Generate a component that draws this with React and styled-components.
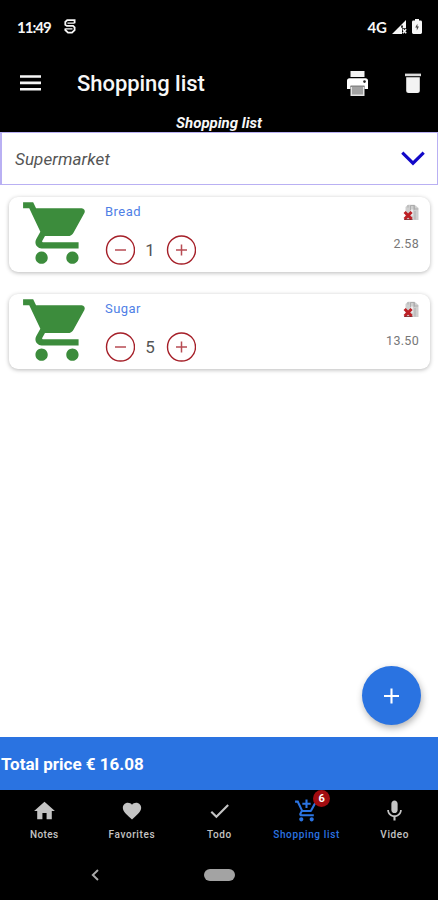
import React from 'react';
import styled, {createGlobalStyle, css} from 'styled-components';

const colors = {
  blue: '#2a73e1',
  link: '#4f7fe6',
  navBlue: '#2b74e2',
  green: '#3c8c3c',
  red: '#a51f28',
  outline: '#b9b0f3',
  chevron: '#1208c8',
  grey: '#c4c4c4',
};

const items = [
  {id: 1, name: 'Bread', count: 1, price: '2.58'},
  {id: 2, name: 'Sugar', count: 5, price: '13.50'},
];

const GlobalStyle = createGlobalStyle`
  * {
    box-sizing: border-box;
  }

  body {
    margin: 0;
    background: #fff;
    font-family: Roboto, 'Liberation Sans', sans-serif;
  }

  svg {
    display: block;
    flex: none;
  }

  button {
    padding: 0;
    border: 0;
    background: none;
    font: inherit;
    color: inherit;
  }
`;

const Screen = styled.div`
  display: flex;
  flex-direction: column;
  width: 438px;
  height: 900px;
  overflow: hidden;
`;

const Header = styled.header`
  flex: none;
  height: 132px;
  background: #000;
  color: #f7f7f7;
`;

const StatusBar = styled.div`
  display: flex;
  align-items: center;
  height: 53px;
  padding: 0 16px 0 17px;
`;

const Clock = styled.span`
  width: 47px;
  font-family: Lato, Roboto, sans-serif;
  font-size: 15px;
  font-weight: 700;
  line-height: 18px;
  letter-spacing: -1px;
`;

const StatusIcons = styled.div`
  display: flex;
  align-items: center;
  gap: 5px;
  margin-left: auto;
`;

const Network = styled.span`
  font-family: Lato, Roboto, sans-serif;
  font-size: 15px;
  font-weight: 700;
  line-height: 18px;
`;

const AppBar = styled.div`
  display: flex;
  align-items: center;
  height: 60px;
  padding: 0 17px 0 20px;
`;

const Title = styled.h1`
  flex: 1;
  margin: 0 0 0 36px;
  padding-top: 1px;
  font-size: 22px;
  font-weight: 500;
  line-height: 26px;
  letter-spacing: -0.05px;
`;

const Actions = styled.div`
  display: flex;
  align-items: center;
  gap: 37px;
`;

const Subtitle = styled.div`
  padding-top: 1px;
  font-size: 15px;
  font-style: italic;
  font-weight: 700;
  line-height: 18px;
  text-align: center;
`;

const Store = styled.button`
  display: flex;
  flex: none;
  align-items: center;
  justify-content: space-between;
  height: 53px;
  padding: 0 12px 0 13px;
  border: 1px solid ${colors.outline};
  border-left-width: 2px;
  color: #555;
`;

const StoreName = styled.span`
  padding-top: 1px;
  font-size: 17px;
  font-style: italic;
  letter-spacing: 0.1px;
`;

const List = styled.main`
  display: flex;
  flex: 1;
  flex-direction: column;
  gap: 22px;
  padding: 12px 8px 0 9px;
`;

const Card = styled.article`
  display: flex;
  height: 75px;
  padding-right: 11px;
  border-radius: 9px;
  background: #fff;
  box-shadow: 0 1px 4px rgba(0, 0, 0, 0.28);
`;

const CartBox = styled.div`
  width: 96px;
  margin-top: -1px;
  padding-left: 11px;
  color: ${colors.green};
`;

const Details = styled.div`
  flex: 1;
`;

const ItemName = styled.div`
  padding-top: 7px;
  font-size: 13px;
  line-height: 16px;
  letter-spacing: 0.45px;
  color: ${colors.link};
`;

const Stepper = styled.div`
  display: flex;
  align-items: center;
  margin-top: 15px;
`;

const StepButton = styled.button`
  width: 30px;
  height: 30px;
  color: ${colors.red};
`;

const Count = styled.span`
  width: 31px;
  padding-right: 1px;
  font-size: 17px;
  line-height: 20px;
  text-align: center;
  color: #555;
`;

const Side = styled.div`
  display: flex;
  flex-direction: column;
  align-items: flex-end;
  padding-top: 7px;
`;

const Price = styled.div`
  margin-top: 15px;
  font-size: 12.5px;
  line-height: 16px;
  letter-spacing: 0.3px;
  color: #777;
`;

const Fab = styled.button`
  display: flex;
  align-items: center;
  justify-content: center;
  align-self: flex-end;
  width: 59px;
  height: 59px;
  margin: auto 9px 12px 0;
  border-radius: 50%;
  background: ${colors.blue};
  box-shadow: 1px 3px 7px rgba(0, 0, 0, 0.3);
  color: #fff;
`;

const Total = styled.div`
  flex: none;
  height: 53px;
  padding-left: 1px;
  background: ${colors.blue};
  font-size: 17px;
  font-weight: 700;
  line-height: 54px;
  color: #fff;
`;

const TabBar = styled.nav`
  display: grid;
  flex: none;
  grid-template-columns: repeat(5, 1fr);
  height: 60px;
  background: #000;
`;

const Tab = styled.div`
  display: flex;
  flex-direction: column;
  align-items: center;
  padding: 8px 0 0 1px;
  color: ${colors.grey};

  ${props =>
    props.$active &&
    css`
      padding-left: 0;
      color: ${colors.navBlue};
    `};
`;

const TabIcon = styled.div`
  position: relative;
  height: 26px;
`;

const TabLabel = styled.span`
  margin-top: 4px;
  font-size: 10px;
  font-weight: 500;
  line-height: 14px;
  letter-spacing: ${props => props.$spacing || 0.15}px;
  white-space: nowrap;
`;

const Badge = styled.span`
  position: absolute;
  top: -8px;
  left: 19px;
  width: 17px;
  height: 17px;
  border-radius: 50%;
  background: #a00c10;
  font-size: 11px;
  font-weight: 700;
  line-height: 17px;
  text-align: center;
  color: #fff;
`;

const SystemBar = styled.div`
  display: grid;
  flex: none;
  grid-template-columns: 190px 58px 190px;
  align-items: center;
  justify-items: center;
  height: 50px;
  background: #000;
  color: #aaa;
`;

const HomePill = styled.div`
  width: 31px;
  height: 12px;
  border-radius: 6px;
  background: #a3a3a3;
`;

const SyncIcon = () => (
  <svg width="12" height="15" viewBox="0 0 12 15" fill="none" stroke="currentColor">
    <path d="M10.6 4.2V1.2H3.2L1.3 3v2.7l1.6 1.2h6.2l1.5 1.5v2.8L8 13.6H4L1.3 11V9.6" strokeWidth="1.8" />
    <path d="M3.5 4.2h7M1.5 9.8h7" strokeWidth="1.3" />
  </svg>
);

const SignalIcon = () => (
  <svg width="15" height="14" viewBox="0 0 15 14">
    <path d="M14 0v8.2h-4V14H0z" fill="currentColor" />
    <path d="M9.2 5.5h1.6v2.3H9.2z" fill="#000" />
    <path d="M10.8 9.3l3.4 3.9M14.2 9.3l-3.4 3.9" stroke="currentColor" strokeWidth="1.5" />
  </svg>
);

const BatteryIcon = () => (
  <svg width="10" height="15" viewBox="0 0 10 15">
    <path d="M3 0h4v1.6h1.6Q10 1.6 10 3v10.6Q10 15 8.6 15H1.4Q0 15 0 13.6V3q0-1.4 1.4-1.4H3z" fill="currentColor" />
    <path d="M5.4 4.8L3.2 8.6h1.6v2.8L6.9 7.6H5.4z" fill="#444" />
  </svg>
);

const MenuIcon = () => (
  <svg width="21" height="16" viewBox="0 0 21 16">
    <path d="M0 .2h21v2.6H0zM0 6.6h21v2.6H0zM0 13h21v2.6H0z" fill="currentColor" />
  </svg>
);

const PrinterIcon = () => (
  <svg width="21" height="25" viewBox="0 0 21 25">
    <path d="M3.5 0h14v6h-14z" fill="#f2f2f2" />
    <path d="M2.5 7.2h16Q21 7.2 21 9.7V18h-3.5v-3.2h-14V18H0V9.7q0-2.5 2.5-2.5z" fill="#fff" />
    <path d="M3.5 15.4h14V25h-14z" fill="#e4e4e4" />
    <path d="M5 16h11v7.5H5z" fill="#a2a2a2" />
    <circle cx="17.5" cy="10.6" r="1.3" fill="#222" />
  </svg>
);

const TrashIcon = () => (
  <svg width="16" height="21" viewBox="0 0 16 21">
    <path d="M0 .6h16v2.6H0z" fill="#ddd" />
    <path d="M1.2 4.2h13.6V17.5q0 2.5-2.5 2.5H3.7q-2.5 0-2.5-2.5z" fill="#f3f3f3" />
  </svg>
);

const ChevronIcon = () => (
  <svg width="24" height="15" viewBox="0 0 24 15">
    <path d="M1.3 1.6L12 12.2 22.7 1.6" fill="none" stroke={colors.chevron} strokeWidth="3.1" />
  </svg>
);

const CartIcon = () => (
  <svg width="74" height="74" viewBox="0 0 24 24" fill="currentColor">
    <path d="M7 18c-1.1 0-1.99.9-1.99 2S5.9 22 7 22s2-.9 2-2-.9-2-2-2zM1 2v2h2l3.6 7.59-1.35 2.45c-.16.28-.25.61-.25.96 0 1.1.9 2 2 2h12v-2H7.42c-.14 0-.25-.11-.25-.25l.03-.12.9-1.63h7.45c.75 0 1.41-.41 1.75-1.03l3.58-6.49A1.003 1.003 0 0 0 20 4H5.21l-.94-2H1zm16 16c-1.1 0-1.99.9-1.99 2s.89 2 1.99 2 2-.9 2-2-.9-2-2-2z" />
  </svg>
);

const StepIcon = ({plus}) => (
  <svg width="30" height="30" viewBox="0 0 30 30" fill="none" stroke="currentColor">
    <circle cx="15.5" cy="15" r="14" strokeWidth="1.4" />
    <path d={plus ? 'M10 15h11M15.5 9.5v11' : 'M10 15h11'} strokeWidth="1.5" opacity="0.8" />
  </svg>
);

// small document with a red cross over its lower left corner
const RemoveIcon = () => (
  <svg width="16" height="17" viewBox="0 0 16 17">
    <path d="M2.5 3L5 .8h6.5L15.5 4v12H2.5z" fill="#cfcfcf" />
    <path d="M5 3.5V1M7.5 6V1.5h3.7V6M11.2 1.2V5h4M12 7v8.5" fill="none" stroke="#aaa" strokeWidth="0.9" />
    <path d="M8 5.5h2v6H8z" fill="#ededed" />
    <path d="M1.6 8l7 7M8.6 8l-7 7" stroke="#bd2025" strokeWidth="3" />
    <path d="M1 15.5h8.5" stroke="#7b1b20" strokeWidth="0.8" />
  </svg>
);

const PlusIcon = () => (
  <svg width="16" height="16" viewBox="0 0 16 16">
    <path d="M0 8h15M7.5 .5v15" stroke="currentColor" strokeWidth="2.1" />
  </svg>
);

const tabPaths = {
  home: 'M10 20v-6h4v6h5v-8h3L12 3 2 12h3v8z',
  heart:
    'M12 21.35l-1.45-1.32C5.4 15.36 2 12.28 2 8.5 2 5.42 4.42 3 7.5 3c1.74 0 3.41.81 4.5 2.09C13.09 3.81 14.76 3 16.5 3 19.58 3 22 5.42 22 8.5c0 3.78-3.4 6.86-8.55 11.54L12 21.35z',
  check: 'M9 16.17L4.83 12l-1.42 1.41L9 19 21 7l-1.41-1.41z',
  cart:
    'M11 9h2V6h3V4h-3V1h-2v3H8v2h3v3zm-4 9c-1.1 0-1.99.9-1.99 2S5.9 22 7 22s2-.9 2-2-.9-2-2-2zm10 0c-1.1 0-1.99.9-1.99 2s.89 2 1.99 2 2-.9 2-2-.9-2-2-2zm-9.83-3.25l.03-.12.9-1.63h7.45c.75 0 1.41-.41 1.75-1.03l3.86-7.01L19.42 4h-.01l-1.1 2-2.76 5H8.53l-.13-.27L6.16 6l-.95-2-.94-2H1v2h2l3.6 7.59-1.35 2.45c-.16.28-.25.61-.25.96 0 1.1.9 2 2 2h12v-2H7.42c-.13 0-.25-.11-.25-.25z',
  mic:
    'M12 14c1.66 0 2.99-1.34 2.99-3L15 5c0-1.66-1.34-3-3-3S9 3.34 9 5v6c0 1.66 1.34 3 3 3zm5.3-3c0 3-2.54 5.1-5.3 5.1S6.7 14 6.7 11H5c0 3.41 2.72 6.23 6 6.72V21h2v-3.28c3.28-.48 6-3.3 6-6.72h-1.7z',
};

const tabs = [
  {icon: 'home', label: 'Notes', size: 25, spacing: 0.35},
  {icon: 'heart', label: 'Favorites', size: 22, spacing: 0.6},
  {icon: 'check', label: 'Todo', size: 25, spacing: 0.6},
  {icon: 'cart', label: 'Shopping list', size: 25, badge: 6, active: true, spacing: 0.65},
  {icon: 'mic', label: 'Video', size: 25, spacing: 0.6},
];

const TabGlyph = ({name, size}) => (
  <svg width={size} height="26" viewBox="0 0 24 24" fill="currentColor">
    <path d={tabPaths[name]} />
  </svg>
);

const BackIcon = () => (
  <svg width="8" height="12" viewBox="0 0 8 12">
    <path d="M7 1L1.8 6 7 11" fill="none" stroke="currentColor" strokeWidth="1.9" />
  </svg>
);

const ShoppingItem = ({name, count, price}) => (
  <Card>
    <CartBox>
      <CartIcon />
    </CartBox>
    <Details>
      <ItemName>{name}</ItemName>
      <Stepper>
        <StepButton aria-label="Less">
          <StepIcon />
        </StepButton>
        <Count>{count}</Count>
        <StepButton aria-label="More">
          <StepIcon plus />
        </StepButton>
      </Stepper>
    </Details>
    <Side>
      <RemoveIcon />
      <Price>{price}</Price>
    </Side>
  </Card>
);

const App = () => (
  <Screen>
    <GlobalStyle />
    <Header>
      <StatusBar>
        <Clock>11:49</Clock>
        <SyncIcon />
        <StatusIcons>
          <Network>4G</Network>
          <SignalIcon />
          <BatteryIcon />
        </StatusIcons>
      </StatusBar>
      <AppBar>
        <MenuIcon />
        <Title>Shopping list</Title>
        <Actions>
          <PrinterIcon />
          <TrashIcon />
        </Actions>
      </AppBar>
      <Subtitle>Shopping list</Subtitle>
    </Header>
    <Store>
      <StoreName>Supermarket</StoreName>
      <ChevronIcon />
    </Store>
    <List>
      {items.map(item => (
        <ShoppingItem key={item.id} {...item} />
      ))}
      <Fab aria-label="Add">
        <PlusIcon />
      </Fab>
    </List>
    <Total>Total price € 16.08</Total>
    <TabBar>
      {tabs.map(tab => (
        <Tab key={tab.label} $active={tab.active}>
          <TabIcon>
            <TabGlyph name={tab.icon} size={tab.size} />
            {tab.badge && <Badge>{tab.badge}</Badge>}
          </TabIcon>
          <TabLabel $spacing={tab.spacing}>{tab.label}</TabLabel>
        </Tab>
      ))}
    </TabBar>
    <SystemBar>
      <BackIcon />
      <HomePill />
    </SystemBar>
  </Screen>
);

export default App;
